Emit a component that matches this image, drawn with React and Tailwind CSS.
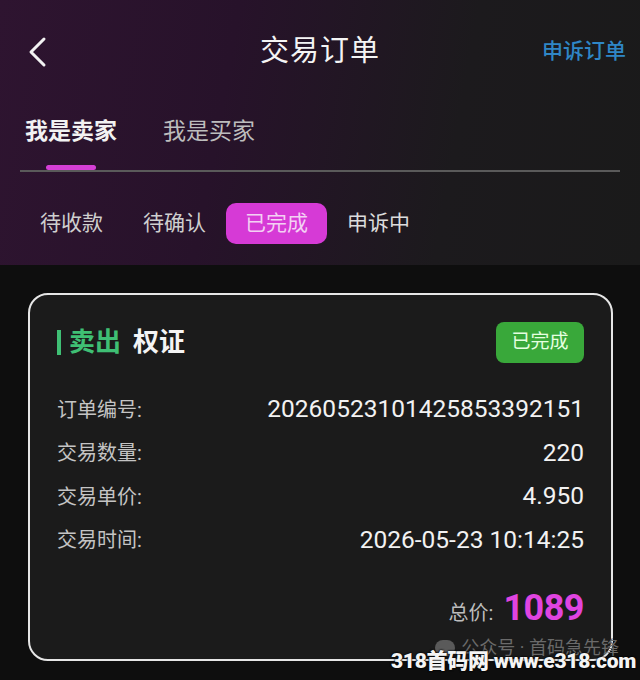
// Trade order detail screen (dark theme, magenta accents)
const FONT = "font-['Roboto','Noto_Sans_CJK_SC',sans-serif]";

const ROWS = [
  { label: '订单编号:', value: '20260523101425853392151' },
  { label: '交易数量:', value: '220' },
  { label: '交易单价:', value: '4.950' },
  { label: '交易时间:', value: '2026-05-23 10:14:25' },
];

function BackIcon() {
  return (
    <svg width="22" height="32" viewBox="0 0 22 32" fill="none">
      <path d="M18 3 L5 16 L18 29" stroke="#f2f2f2" strokeWidth="3" strokeLinecap="round" strokeLinejoin="round" />
    </svg>
  );
}

export default function App() {
  return (
    <div className={`w-[640px] h-[680px] overflow-hidden bg-[#0e0e0e] text-white ${FONT}`}>
      {/* ── Header with purple glow ───────────────────────────── */}
      <div className="h-[265px] bg-[linear-gradient(100deg,#2e1430_0%,#27122a_35%,#1c1a1d_70%,#1a1a1a_100%)]">
        {/* Top bar */}
        <div className="h-[104px] flex items-center pl-[26px] pr-[14px] relative">
          <BackIcon />
          <div className="absolute left-1/2 -translate-x-1/2 text-[29px] text-[#f4f4f4] tracking-[1px]">交易订单</div>
          <div className="ml-auto text-[21px] text-[#2f86c6] font-medium">申诉订单</div>
        </div>

        {/* Seller / buyer tabs */}
        <div className="px-[20px] pt-[9px]">
          <div className="flex items-end gap-[46px] pl-[5px] h-[57px]">
            <div className="flex flex-col items-center">
              <span className="text-[23px] font-bold text-[#f2f2f2] leading-none">我是卖家</span>
              <span className="mt-[22px] h-[5px] w-[50px] rounded-full bg-[#d53fd5]" />
            </div>
            <div className="flex flex-col items-center">
              <span className="text-[23px] text-[#bdbdbd] leading-none">我是买家</span>
              <span className="mt-[22px] h-[5px] w-[50px]" />
            </div>
          </div>
          <div className="h-[2px] bg-[#5a5a5a]" />
        </div>

        {/* Status filter */}
        <div className="flex items-center gap-[20px] pl-[40px] mt-[31px]">
          <span className="text-[21px] text-[#cfcfcf] w-[83px]">待收款</span>
          <span className="text-[21px] text-[#cfcfcf]">待确认</span>
          <span className="text-[21px] text-[#f3d0f3] bg-[#d63ad6] rounded-[10px] w-[101px] h-[41px] flex items-center justify-center">已完成</span>
          <span className="text-[21px] text-[#dcdcdc]">申诉中</span>
        </div>
      </div>

      {/* ── Order card ────────────────────────────────────────── */}
      <div className="mx-[28px] mt-[28px] w-[585px] h-[368px] rounded-[20px] border-2 border-[#e6e6e6] bg-[#1b1b1b] px-[27px] pt-[27px] relative">
        <div className="flex items-center justify-between">
          <div className="flex items-center">
            <span className="w-[4px] h-[25px] bg-[#3fbf74]" />
            <span className="ml-[8px] text-[26px] font-bold text-[#3fbf74]">卖出</span>
            <span className="ml-[12px] text-[26px] font-bold text-[#f4f4f4]">权证</span>
          </div>
          <span className="w-[88px] h-[41px] rounded-[8px] bg-[#39a83a] text-[19px] text-[#e6ffe0] flex items-center justify-center">已完成</span>
        </div>

        <div className="mt-[32px] flex flex-col gap-[14.5px]">
          {ROWS.map((r) => (
            <div key={r.label} className="flex items-center justify-between h-[29px]">
              <span className="text-[20px] text-[#c4c4c4]">{r.label}</span>
              <span className="text-[24.5px] text-[#f2f2f2]">{r.value}</span>
            </div>
          ))}
        </div>

        <div className="mt-[26px] flex items-baseline justify-end">
          <span className="text-[20px] text-[#bdbdbd]">总价:</span>
          <span className="ml-[10px] text-[36px] font-bold text-[#e044e0] tracking-[-0.5px]">1089</span>
        </div>

        {/* watermark */}
        <div className="absolute right-[-8px] bottom-[-2px] flex items-center gap-[6px] text-[18px] text-[#6a6a6a]">
          <span className="w-[20px] h-[16px] rounded-full bg-[#5a5a5a]" />
          <span>公众号 · 首码急先锋</span>
        </div>
      </div>
      <div className="relative -mt-[14px] flex justify-end pr-[4px] text-[21px] leading-[28px] font-black text-[#f4f4f4] tracking-[-0.3px] [text-shadow:0_0_2px_#000,0_0_2px_#000]">
        318首码网 www.e318.com
      </div>
    </div>
  );
}
